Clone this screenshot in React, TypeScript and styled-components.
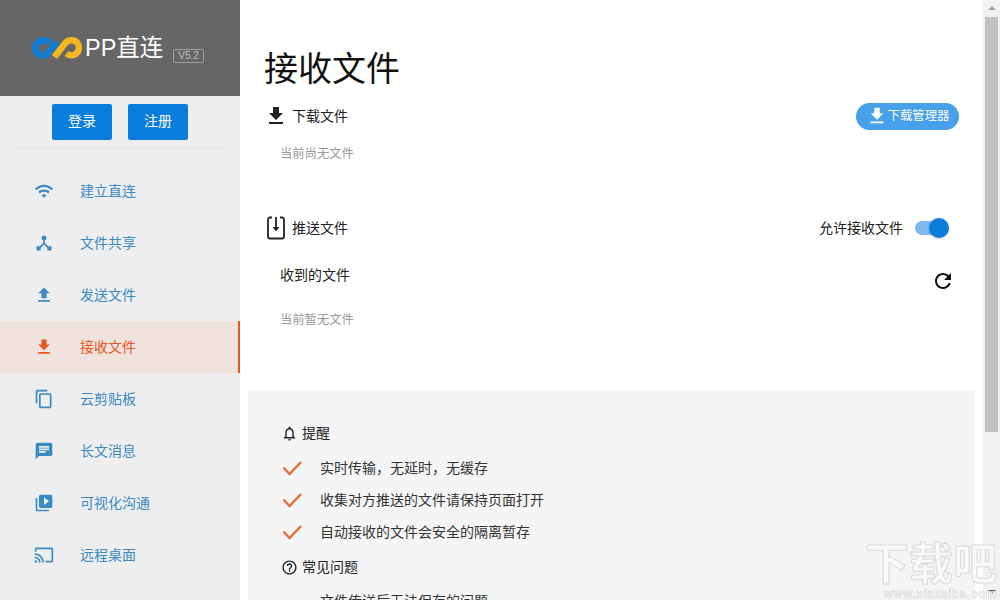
import { ReactNode } from "react";
import styled, { createGlobalStyle } from "styled-components";

const FONT = `"Liberation Sans", "Noto Sans CJK SC", sans-serif`;

const GlobalStyle = createGlobalStyle`
  html, body {
    margin: 0;
    height: 100%;
    overflow: hidden;
    background: #fff;
    font-family: ${FONT};
  }
  #root { height: 100%; }
`;

const Icon = ({ d, size = 24, color = "currentColor" }: { d: string; size?: number; color?: string }) => (
  <svg width={size} height={size} viewBox="0 0 24 24" fill={color}>
    <path d={d} />
  </svg>
);

const ICONS = {
  wifi: "M1 9l2 2c4.97-4.97 13.03-4.97 18 0l2-2C16.93 2.93 7.08 2.93 1 9zm8 8l3 3 3-3c-1.65-1.66-4.34-1.66-6 0zm-4-4l2 2c2.76-2.76 7.24-2.76 10 0l2-2C15.14 9.14 8.87 9.14 5 13z",
  share: "M17 16l-4-4V8.82C14.16 8.4 15 7.3 15 6c0-1.66-1.34-3-3-3S9 4.34 9 6c0 1.3.84 2.4 2 2.82V12l-4 4H3v5h5v-3.05l4-4.2 4 4.2V21h5v-5h-4z",
  upload: "M9 16h6v-6h4l-7-7-7 7h4zm-4 2h14v2H5z",
  download: "M19 9h-4V3H9v6H5l7 7 7-7zM5 18v2h14v-2H5z",
  copy: "M16 1H4c-1.1 0-2 .9-2 2v14h2V3h12V1zm3 4H8c-1.1 0-2 .9-2 2v14c0 1.1.9 2 2 2h11c1.1 0 2-.9 2-2V7c0-1.1-.9-2-2-2zm0 16H8V7h11v14z",
  message: "M20 2H4c-1.1 0-1.99.9-1.99 2L2 22l4-4h14c1.1 0 2-.9 2-2V4c0-1.1-.9-2-2-2zM6 9h12v2H6V9zm8 5H6v-2h8v2zm4-6H6V6h12v2z",
  video: "M4 6H2v14c0 1.1.9 2 2 2h14v-2H4V6zm16-4H8c-1.1 0-2 .9-2 2v12c0 1.1.9 2 2 2h12c1.1 0 2-.9 2-2V4c0-1.1-.9-2-2-2zm-8 12.5v-9l6 4.5-6 4.5z",
  cast: "M21 3H3c-1.1 0-2 .9-2 2v3h2V5h18v14h-7v2h7c1.1 0 2-.9 2-2V5c0-1.1-.9-2-2-2zM1 18v3h3c0-1.66-1.34-3-3-3zm0-4v2c2.76 0 5 2.24 5 5h2c0-3.87-3.13-7-7-7zm0-4v2c4.97 0 9 4.03 9 9h2c0-6.08-4.93-11-11-11z",
  refresh: "M17.65 6.35C16.2 4.9 14.21 4 12 4c-4.42 0-7.99 3.58-7.99 8s3.57 8 7.99 8c3.73 0 6.84-2.55 7.73-6h-2.08c-.82 2.33-3.04 4-5.65 4-3.31 0-6-2.69-6-6s2.69-6 6-6c1.66 0 3.14.69 4.22 1.78L13 11h7V4l-2.35 2.35z",
  bell: "M12 22c1.1 0 2-.9 2-2h-4c0 1.1.9 2 2 2zm6-6v-5c0-3.07-1.63-5.64-4.5-6.32V4c0-.83-.67-1.5-1.5-1.5s-1.5.67-1.5 1.5v.68C7.64 5.36 6 7.92 6 11v5l-2 2v1h16v-1l-2-2zm-2 1H8v-6c0-2.48 1.51-4.5 4-4.5s4 2.02 4 4.5v6z",
  help: "M11 18h2v-2h-2v2zm1-16C6.48 2 2 6.48 2 12s4.48 10 10 10 10-4.48 10-10S17.52 2 12 2zm0 18c-4.41 0-8-3.59-8-8s3.59-8 8-8 8 3.59 8 8-3.59 8-8 8zm0-14c-2.21 0-4 1.79-4 4h2c0-1.1.9-2 2-2s2 .9 2 2c0 2-3 1.75-3 5h2c0-2.25 3-2.5 3-5 0-2.21-1.79-4-4-4z",
};

const NAV = [
  { icon: ICONS.wifi, label: "建立直连" },
  { icon: ICONS.share, label: "文件共享" },
  { icon: ICONS.upload, label: "发送文件" },
  { icon: ICONS.download, label: "接收文件", active: true },
  { icon: ICONS.copy, label: "云剪贴板" },
  { icon: ICONS.message, label: "长文消息" },
  { icon: ICONS.video, label: "可视化沟通" },
  { icon: ICONS.cast, label: "远程桌面" },
];

const Logo = () => (
  <svg width="50" height="24" viewBox="0 0 50 24" fill="none" strokeWidth="6.5">
    <path d="M18 6.8 C14.5 3.2 8 3.6 5 7 C2.2 10.4 3 16 6.5 18.2 C10 20.4 14.5 19.5 17 16.5" stroke="#0f7cd6" />
    <path d="M14 19 L25 6" stroke="#0f7cd6" />
    <path d="M22.5 21 L33 7.5 C36 3.4 42 3.4 45 6.5 C48 10 47.5 15 44 17.8 C41 20 37 19.6 34.5 17.5" stroke="#f3b724" />
  </svg>
);

const PushFileIcon = () => (
  <svg width="24" height="24" viewBox="0 0 24 24" fill="none" stroke="#222" strokeWidth="1.8">
    <path d="M8 1.5H6a2 2 0 0 0-2 2v17a2 2 0 0 0 2 2h12a2 2 0 0 0 2-2v-17a2 2 0 0 0-2-2h-2" />
    <path d="M12 1v11" />
    <path d="M8.5 11h7L12 15.5z" fill="#222" stroke="none" />
  </svg>
);

const Page = styled.div`
  display: flex;
  height: 600px;
  overflow: hidden;
`;

const Sidebar = styled.aside`
  flex: 0 0 240px;
  background: #eeeeee;
  display: flex;
  flex-direction: column;
`;

const Brand = styled.div`
  height: 96px;
  background: #666666;
  display: flex;
  align-items: center;
  padding: 0 0 0 32px;
  box-sizing: border-box;
`;

const BrandName = styled.span`
  color: #fff;
  font-size: 23.5px;
  line-height: 28px;
  margin-left: 3px;
`;

const Version = styled.span`
  margin: 15px 0 0 10px;
  border: 1px solid #a0a0a0;
  border-radius: 2px;
  color: #bdbdbd;
  font-size: 10px;
  line-height: 12px;
  padding: 0 4px;
`;

const AuthRow = styled.div`
  display: flex;
  justify-content: center;
  gap: 16px;
  margin: 8px 16px 0;
  padding-bottom: 8px;
  border-bottom: 1px solid #e6e6e6;
`;

const AuthButton = styled.button`
  width: 60px;
  height: 36px;
  border: 0;
  border-radius: 2px;
  background: #0a7cdc;
  color: #fff;
  font: 14px ${FONT};
  padding: 0 0 5px;
`;

const Nav = styled.nav`
  margin-top: 16px;
  display: flex;
  flex-direction: column;
`;

const NavItem = styled.div<{ $active?: boolean }>`
  height: 52px;
  display: flex;
  align-items: center;
  box-sizing: border-box;
  padding-left: 34px;
  gap: 26px;
  font-size: 14px;
  color: ${({ $active }) => ($active ? "#e8561c" : "#3a8ac4")};
  background: ${({ $active }) => ($active ? "#f0e2dc" : "transparent")};
  border-right: ${({ $active }) => ($active ? "2px solid #e8561c" : "0")};
`;

const Label = styled.span`
  margin-bottom: 2px;
`;

const Main = styled.main`
  flex: 1;
  min-width: 0;
  display: flex;
  flex-direction: column;
  padding-left: 8px;
`;

const Content = styled.div`
  padding: 0 41px 0 16px;
  height: 391px;
  box-sizing: border-box;
  flex: none;
`;

const Title = styled.h1`
  margin: 0;
  padding-top: 48px;
  font-size: 34px;
  line-height: 42px;
  font-weight: 400;
  color: #111;
`;

const SectionRow = styled.div<{ $top: number }>`
  display: flex;
  align-items: center;
  justify-content: space-between;
  margin-top: ${({ $top }) => $top}px;
  height: 28px;
`;

const SectionTitle = styled.div`
  display: flex;
  align-items: center;
  gap: 4px;
  font-size: 14px;
  color: #222;
`;

const Empty = styled.div<{ $top: number }>`
  margin: ${({ $top }) => $top}px 0 0 16px;
  font-size: 12.3px;
  line-height: 16px;
  color: #999;
`;

const PillButton = styled.button`
  display: flex;
  align-items: center;
  justify-content: center;
  width: 103px;
  height: 27px;
  border: 0;
  border-radius: 14px;
  background: #47a0ea;
  color: #fff;
  font: 12.4px ${FONT};
  padding: 0;
`;

const ToggleWrap = styled.div`
  display: flex;
  align-items: center;
  gap: 12px;
  margin-right: 12px;
  font-size: 14px;
  color: #222;
`;

const Toggle = styled.div`
  position: relative;
  width: 32px;
  height: 14px;
  border-radius: 7px;
  background: #7db8ef;
`;

const Knob = styled.span`
  position: absolute;
  right: -2px;
  top: -3px;
  width: 20px;
  height: 20px;
  border-radius: 50%;
  background: #0a7cdc;
  box-shadow: 0 1px 3px rgba(0, 0, 0, 0.2);
`;

const ReceivedRow = styled.div`
  display: flex;
  align-items: center;
  justify-content: space-between;
  margin: 18px 4px 0 16px;
  height: 30px;
  font-size: 14px;
  color: #222;

  svg {
    margin-top: 12px;
  }
`;

const Notes = styled.section`
  flex: 1;
  margin-right: 25px;
  background: #f5f5f5;
  padding: 28px 0 0 34px;
`;

const NoteHead = styled.div<{ $top?: number }>`
  display: flex;
  align-items: center;
  gap: 4px;
  height: 28px;
  margin: ${({ $top = 0 }) => $top}px 0 0 -1px;
  font-size: 14px;
  color: #222;
`;

const CheckList = styled.div`
  margin-top: 5px;
`;

const CheckRow = styled.div`
  display: flex;
  align-items: center;
  height: 32px;
  gap: 18px;
  font-size: 14px;
  color: #333;
`;

const Question = styled.div`
  margin: 12px 0 0 38px;
  font-size: 14px;
  line-height: 16px;
  color: #333;
`;

const ScrollTrack = styled.div`
  position: fixed;
  top: 0;
  right: 0;
  width: 17px;
  height: 600px;
  background: #f1f1f1;
`;

const ScrollThumb = styled.div`
  width: 13px;
  margin: 17px 0 0 2px;
  height: 415px;
  background: #c1c1c1;
`;

const ScrollArrow = styled.div<{ $up?: boolean }>`
  position: absolute;
  left: 5px;
  width: 0;
  height: 0;
  border-left: 4px solid transparent;
  border-right: 4px solid transparent;
  ${({ $up }) =>
    $up
      ? "top: 6px; border-bottom: 4px solid #a0a0a0;"
      : "bottom: 6px; border-top: 4px solid #505050;"}
`;

const Watermark = styled.div`
  position: fixed;
  right: 3px;
  bottom: 0;
  width: 134px;
  text-align: right;
  pointer-events: none;
`;

const WatermarkTitle = styled.div`
  font-size: 44px;
  line-height: 46px;
  font-weight: 700;
  color: rgba(250, 250, 250, 0.9);
  -webkit-text-stroke: 1px #d8d8d8;
`;

const WatermarkUrl = styled.div`
  font-size: 12px;
  line-height: 12px;
  font-weight: 700;
  letter-spacing: 0.5px;
  color: rgba(250, 250, 250, 0.9);
  -webkit-text-stroke: 0.5px #cfcfcf;
`;

const Check = () => (
  <svg width="20" height="16" viewBox="0 0 20 16" fill="none">
    <path d="M1.5 7.5 L7.5 14 L19 2" stroke="#e8693a" strokeWidth="2.4" />
  </svg>
);

const Note = ({ children }: { children: ReactNode }) => (
  <CheckRow>
    <Check />
    <Label>{children}</Label>
  </CheckRow>
);

export default function App() {
  return (
    <>
      <GlobalStyle />
      <Page>
        <Sidebar>
          <Brand>
            <Logo />
            <BrandName>PP直连</BrandName>
            <Version>V5.2</Version>
          </Brand>
          <AuthRow>
            <AuthButton>登录</AuthButton>
            <AuthButton>注册</AuthButton>
          </AuthRow>
          <Nav>
            {NAV.map((item) => (
              <NavItem key={item.label} $active={item.active}>
                <Icon d={item.icon} size={20} />
                <Label>{item.label}</Label>
              </NavItem>
            ))}
          </Nav>
        </Sidebar>
        <Main>
          <Content>
            <Title>接收文件</Title>
            <SectionRow $top={12}>
              <SectionTitle>
                <Icon d={ICONS.download} color="#222" />
                <Label>下载文件</Label>
              </SectionTitle>
              <PillButton>
                <Icon d={ICONS.download} size={22} />
                <Label>下载管理器</Label>
              </PillButton>
            </SectionRow>
            <Empty $top={16}>当前尚无文件</Empty>
            <SectionRow $top={52}>
              <SectionTitle>
                <PushFileIcon />
                <Label>推送文件</Label>
              </SectionTitle>
              <ToggleWrap>
                <Label>允许接收文件</Label>
                <Toggle>
                  <Knob />
                </Toggle>
              </ToggleWrap>
            </SectionRow>
            <ReceivedRow>
              <Label>收到的文件</Label>
              <Icon d={ICONS.refresh} color="#111" />
            </ReceivedRow>
            <Empty $top={22}>当前暂无文件</Empty>
          </Content>
          <Notes>
            <NoteHead>
              <Icon d={ICONS.bell} size={17} color="#222" />
              <Label>提醒</Label>
            </NoteHead>
            <CheckList>
              <Note>实时传输，无延时，无缓存</Note>
              <Note>收集对方推送的文件请保持页面打开</Note>
              <Note>自动接收的文件会安全的隔离暂存</Note>
            </CheckList>
            <NoteHead $top={5}>
              <Icon d={ICONS.help} size={17} color="#222" />
              <Label>常见问题</Label>
            </NoteHead>
            <Question>文件传送后无法保存的问题</Question>
          </Notes>
        </Main>
      </Page>
      <ScrollTrack>
        <ScrollArrow $up />
        <ScrollThumb />
        <ScrollArrow />
      </ScrollTrack>
      <Watermark>
        <WatermarkTitle>下载吧</WatermarkTitle>
        <WatermarkUrl>www.xiazaiba.com</WatermarkUrl>
      </Watermark>
    </>
  );
}
